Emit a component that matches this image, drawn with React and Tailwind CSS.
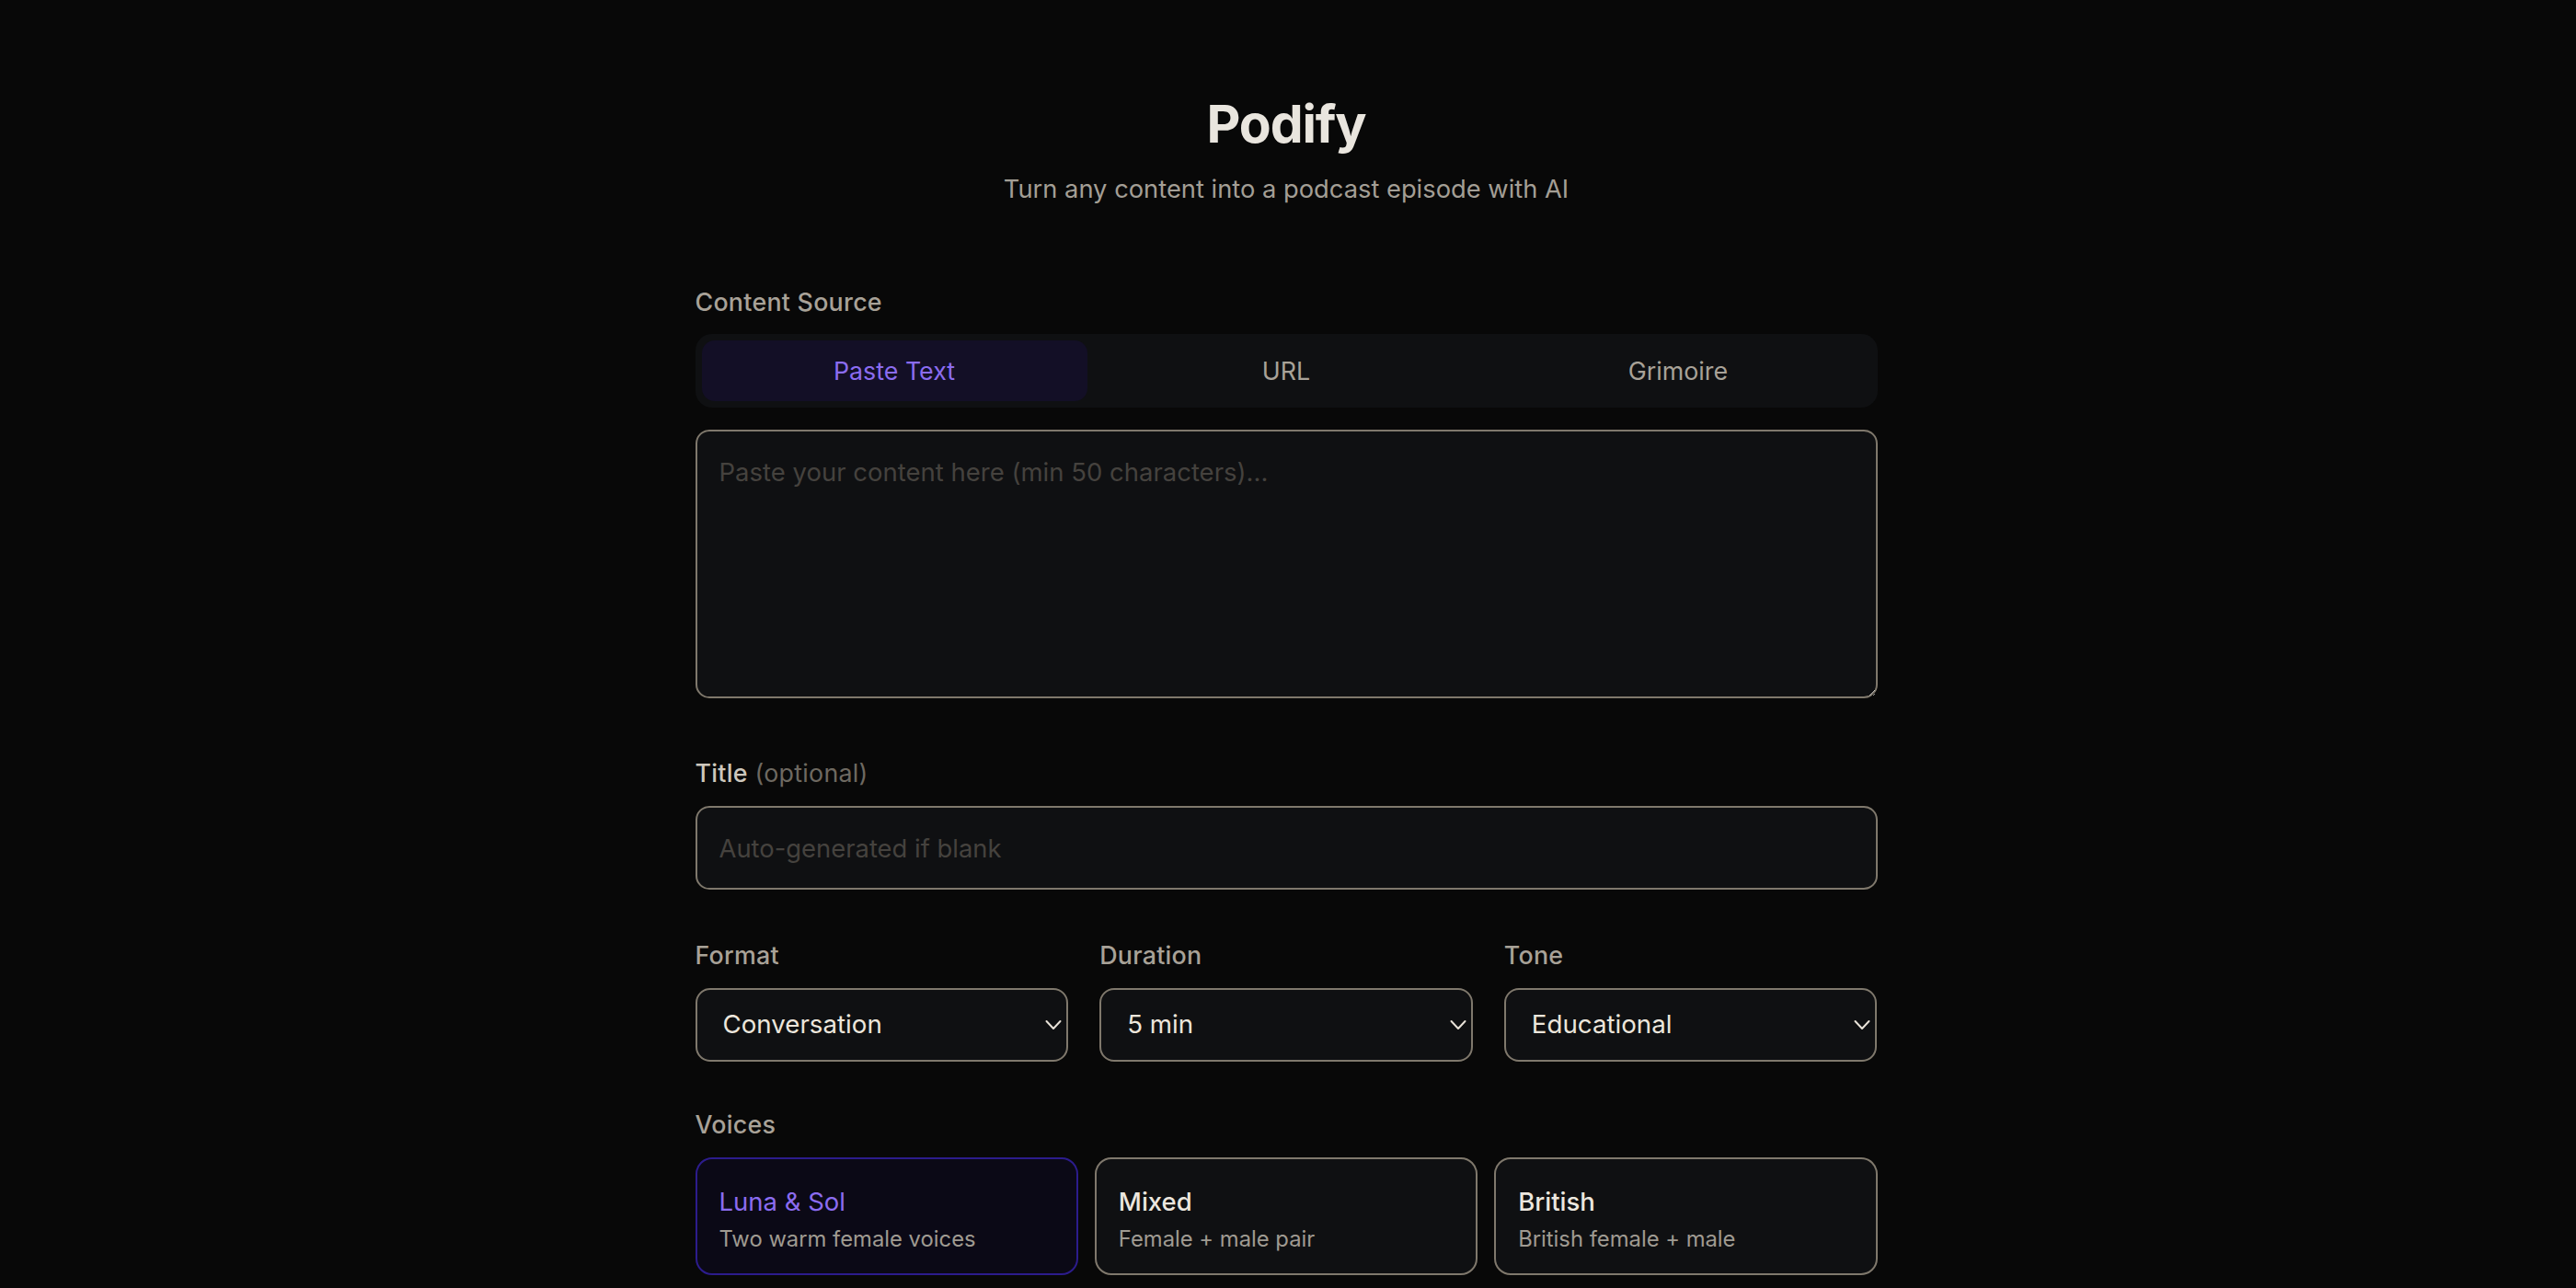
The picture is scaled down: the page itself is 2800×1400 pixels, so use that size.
import { useState } from "react";

const tabs = ["Paste Text", "URL", "Grimoire"];

const selects = [
  { label: "Format", value: "Conversation", options: ["Conversation", "Monologue", "Interview"] },
  { label: "Duration", value: "5 min", options: ["2 min", "5 min", "10 min", "15 min"] },
  { label: "Tone", value: "Educational", options: ["Educational", "Casual", "Storytelling"] },
];

const voices = [
  { id: "luna", name: "Luna & Sol", desc: "Two warm female voices" },
  { id: "mixed", name: "Mixed", desc: "Female + male pair" },
  { id: "british", name: "British", desc: "British female + male" },
];

function Label({ children, className = "mb-[18px]" }) {
  return (
    <div className={`${className} text-[26.8px] leading-[36px] font-medium tracking-[0.01em] text-[#a8a298]`}>
      {children}
    </div>
  );
}

function Chevron() {
  return (
    <svg
      className="pointer-events-none absolute right-[7px] top-1/2 h-[11px] w-[18px] -translate-y-1/2 text-[#e8e2d8]"
      viewBox="0 0 18 11"
      fill="none"
      stroke="currentColor"
      strokeWidth="2"
      strokeLinecap="round"
      strokeLinejoin="round"
    >
      <path d="M1.5 1.5l7.5 8 7.5-8" />
    </svg>
  );
}

export default function App() {
  const [tab, setTab] = useState("Paste Text");
  const [voice, setVoice] = useState("luna");

  return (
    <div className="min-h-screen bg-[#080808] font-['Inter','Noto_Sans',sans-serif] antialiased">
      <div className="mx-auto w-[1285px] -translate-x-[2px] pb-[80px]">
        <h1 className="pt-[101px] text-center text-[57px] leading-[68px] font-bold tracking-[-0.02em] text-[#e9e5de]">
          Podify
        </h1>
        <p className="mt-[17px] text-center text-[27.3px] leading-[40px] text-[#a39e95]">
          Turn any content into a podcast episode with AI
        </p>

        {/* sumber konten */}
        <div className="mt-[84px]">
          <Label className="mb-[17px]">Content Source</Label>
          <div className="grid grid-cols-3 gap-[7px] rounded-[18px] bg-[#0f1012] p-[7px]">
            {tabs.map((t) => (
              <button
                key={t}
                onClick={() => setTab(t)}
                className={
                  t === tab
                    ? "h-[66px] rounded-[14px] bg-[#130f26] text-[26.8px] text-[#8b6cf0]"
                    : "h-[66px] rounded-[14px] text-[26.8px] text-[#a8a298]"
                }
              >
                {t}
              </button>
            ))}
          </div>
          <textarea
            placeholder="Paste your content here (min 50 characters)..."
            className="mt-[24px] block h-[292px] w-full rounded-[15px] border-2 border-[#7f786c] bg-[#0f1012] px-[24px] py-[24px] text-[27.5px] leading-[40px] text-[#ece6dc] outline-none placeholder:text-[#45423e]"
          />
        </div>

        <div className="mt-[63px]">
          <div className="mb-[18px] text-[26.8px] leading-[36px] tracking-[0.01em]">
            <span className="font-medium text-[#cdc7bc]">Title</span>{" "}
            <span className="text-[#6e6961]">(optional)</span>
          </div>
          <input
            placeholder="Auto-generated if blank"
            className="block h-[91px] w-full rounded-[15px] border-2 border-[#7f786c] bg-[#0f1012] px-[24px] text-[27.4px] text-[#ece6dc] outline-none placeholder:text-[#45423e]"
          />
        </div>

        <div className="mt-[53px] grid grid-cols-3 gap-[34px]">
          {selects.map((s) => (
            <div key={s.label}>
              <Label>{s.label}</Label>
              <div className="relative">
                <select
                  defaultValue={s.value}
                  className="block h-[80px] w-full appearance-none rounded-[16px] border-2 border-[#7f786c] bg-[#0f1012] pl-[28px] text-[27.7px] text-[#ece6dc] outline-none"
                >
                  {s.options.map((o) => (
                    <option key={o}>{o}</option>
                  ))}
                </select>
                <Chevron />
              </div>
            </div>
          ))}
        </div>

        <div className="mt-[50px]">
          <Label>Voices</Label>
          <div className="grid grid-cols-3 gap-[18px]">
            {voices.map((v) => {
              const active = v.id === voice;
              return (
                <button
                  key={v.id}
                  onClick={() => setVoice(v.id)}
                  className={
                    active
                      ? "flex h-[128px] flex-col items-start justify-start rounded-[18px] border-2 border-[#2c1c8c] bg-[#0b0916] px-[24px] pt-[28px] text-left"
                      : "flex h-[128px] flex-col items-start justify-start rounded-[18px] border-2 border-[#7f786c] bg-[#0f1012] px-[24px] pt-[28px] text-left"
                  }
                >
                  <div
                    className={
                      active
                        ? "text-[27.5px] leading-[37.5px] text-[#8b6cf0]"
                        : "text-[27.5px] leading-[37.5px] font-medium text-[#ece7df]"
                    }
                  >
                    {v.name}
                  </div>
                  <div className="mt-[5px] text-[23.8px] leading-[32px] text-[#9f9a91]">{v.desc}</div>
                </button>
              );
            })}
          </div>
        </div>
      </div>
    </div>
  );
}
